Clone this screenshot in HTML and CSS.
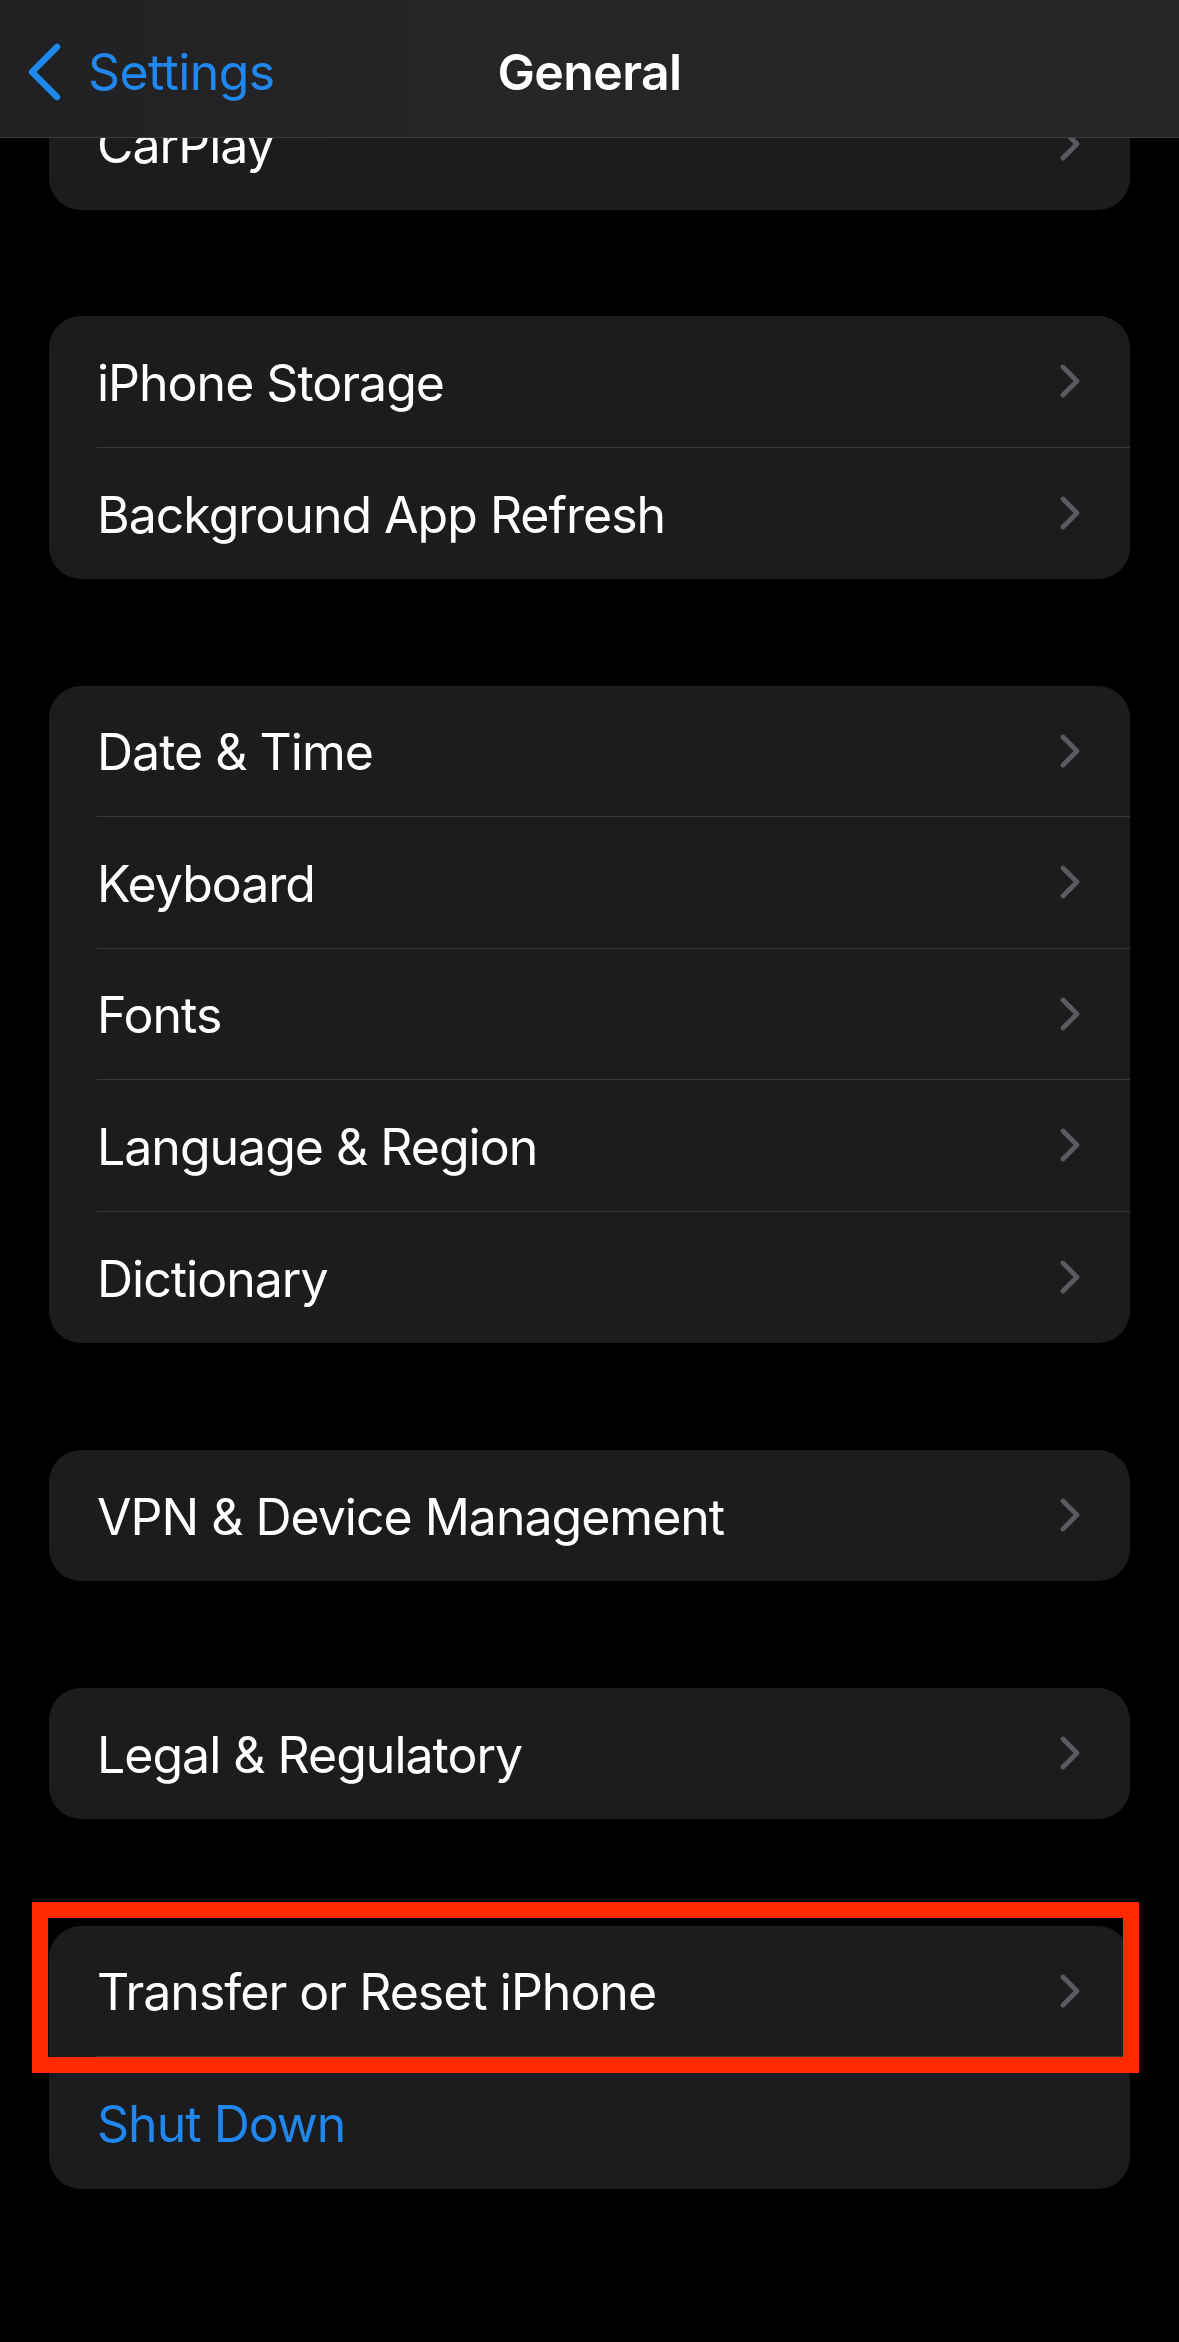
FILE: index.html
```html
<!DOCTYPE html>
<html>
<head>
<meta charset="utf-8">
<link rel="stylesheet" href="styles.css">
</head>
<body>
<header class="nav">
  <div class="nav-back">
    <svg class="back-chev" width="36" height="58" viewBox="0 0 36 58"><path d="M31 4 L6 29 L31 54" fill="none" stroke="#1f87ee" stroke-width="6.5" stroke-linecap="round" stroke-linejoin="round"/></svg>
    <span class="back-label">Settings</span>
  </div>
  <div class="nav-title">General</div>
</header>

<main class="content">
  <section class="group group-first">
    <div class="row last"><div class="row-body"><span class="label">CarPlay</span><svg class="chev" width="20" height="34" viewBox="0 0 20 34"><path d="M3 3 L17 17 L3 31" fill="none" stroke="#5b5b5f" stroke-width="4.8" stroke-linecap="round" stroke-linejoin="round"/></svg></div></div>
  </section>

  <section class="group">
    <div class="row"><div class="row-body"><span class="label">iPhone Storage</span><svg class="chev" width="20" height="34" viewBox="0 0 20 34"><path d="M3 3 L17 17 L3 31" fill="none" stroke="#5b5b5f" stroke-width="4.8" stroke-linecap="round" stroke-linejoin="round"/></svg></div></div>
    <div class="row last"><div class="row-body"><span class="label">Background App Refresh</span><svg class="chev" width="20" height="34" viewBox="0 0 20 34"><path d="M3 3 L17 17 L3 31" fill="none" stroke="#5b5b5f" stroke-width="4.8" stroke-linecap="round" stroke-linejoin="round"/></svg></div></div>
  </section>

  <section class="group">
    <div class="row"><div class="row-body"><span class="label">Date &amp; Time</span><svg class="chev" width="20" height="34" viewBox="0 0 20 34"><path d="M3 3 L17 17 L3 31" fill="none" stroke="#5b5b5f" stroke-width="4.8" stroke-linecap="round" stroke-linejoin="round"/></svg></div></div>
    <div class="row"><div class="row-body"><span class="label">Keyboard</span><svg class="chev" width="20" height="34" viewBox="0 0 20 34"><path d="M3 3 L17 17 L3 31" fill="none" stroke="#5b5b5f" stroke-width="4.8" stroke-linecap="round" stroke-linejoin="round"/></svg></div></div>
    <div class="row"><div class="row-body"><span class="label">Fonts</span><svg class="chev" width="20" height="34" viewBox="0 0 20 34"><path d="M3 3 L17 17 L3 31" fill="none" stroke="#5b5b5f" stroke-width="4.8" stroke-linecap="round" stroke-linejoin="round"/></svg></div></div>
    <div class="row"><div class="row-body"><span class="label">Language &amp; Region</span><svg class="chev" width="20" height="34" viewBox="0 0 20 34"><path d="M3 3 L17 17 L3 31" fill="none" stroke="#5b5b5f" stroke-width="4.8" stroke-linecap="round" stroke-linejoin="round"/></svg></div></div>
    <div class="row last"><div class="row-body"><span class="label">Dictionary</span><svg class="chev" width="20" height="34" viewBox="0 0 20 34"><path d="M3 3 L17 17 L3 31" fill="none" stroke="#5b5b5f" stroke-width="4.8" stroke-linecap="round" stroke-linejoin="round"/></svg></div></div>
  </section>

  <section class="group">
    <div class="row last"><div class="row-body"><span class="label">VPN &amp; Device Management</span><svg class="chev" width="20" height="34" viewBox="0 0 20 34"><path d="M3 3 L17 17 L3 31" fill="none" stroke="#5b5b5f" stroke-width="4.8" stroke-linecap="round" stroke-linejoin="round"/></svg></div></div>
  </section>

  <section class="group">
    <div class="row last"><div class="row-body"><span class="label">Legal &amp; Regulatory</span><svg class="chev" width="20" height="34" viewBox="0 0 20 34"><path d="M3 3 L17 17 L3 31" fill="none" stroke="#5b5b5f" stroke-width="4.8" stroke-linecap="round" stroke-linejoin="round"/></svg></div></div>
  </section>

  <section class="group">
    <div class="row"><div class="row-body"><span class="label">Transfer or Reset iPhone</span><svg class="chev" width="20" height="34" viewBox="0 0 20 34"><path d="M3 3 L17 17 L3 31" fill="none" stroke="#5b5b5f" stroke-width="4.8" stroke-linecap="round" stroke-linejoin="round"/></svg></div></div>
    <div class="row last"><div class="row-body"><span class="label action">Shut Down</span></div></div>
  </section>
</main>

<div class="highlight"></div>
</body>
</html>
```

FILE: styles.css
```css
html, body {
  margin: 0;
  padding: 0;
}
body {
  background: #000;
  width: 1179px;
  height: 2342px;
  overflow: hidden;
  position: relative;
  font-family: Inter, "Noto Sans", "Liberation Sans", sans-serif;
  color: #fff;
  -webkit-font-smoothing: antialiased;
}

.nav {
  position: absolute;
  top: 0;
  left: 0;
  right: 0;
  height: 138px;
  box-sizing: border-box;
  padding-top: 7px;
  background: linear-gradient(90deg, #212123 0%, #262628 45%, #252527 100%);
  border-bottom: 1px solid #3a3a3c;
  display: flex;
  align-items: center;
  z-index: 5;
}
.nav-back {
  display: flex;
  align-items: center;
  margin-left: 26px;
  gap: 26px;
}
.back-chev {
  display: block;
}
.back-label {
  font-size: 50px;
  letter-spacing: -0.6px;
  color: #1f87ee;
}
.nav-title {
  position: absolute;
  left: 0;
  right: 0;
  top: 7px;
  bottom: 0;
  display: flex;
  align-items: center;
  justify-content: center;
  font-size: 50px;
  font-weight: 600;
  letter-spacing: -0.6px;
  pointer-events: none;
}

.content {
  padding: 78px 49px 0;
  display: flex;
  flex-direction: column;
  gap: 106.5px;
}

.group {
  background: #1c1c1e;
  border-radius: 32px;
  overflow: hidden;
}

.row {
  height: 131.5px;
  padding-left: 48px;
  box-sizing: border-box;
}
.row-body {
  height: 100%;
  box-sizing: border-box;
  display: flex;
  align-items: center;
  justify-content: space-between;
  padding-right: 50px;
  border-bottom: 1.5px solid #38383a;
}
.row.last .row-body {
  border-bottom: none;
}
.label {
  font-size: 50px;
  letter-spacing: -1px;
  color: #fff;
  white-space: nowrap;
  position: relative;
  top: 1.5px;
}
.label.action {
  color: #1f87ee;
}
.chev {
  display: block;
  flex-shrink: 0;
}

.highlight {
  position: absolute;
  left: 32px;
  top: 1902px;
  width: 1107px;
  height: 171px;
  box-sizing: border-box;
  border: 16.5px solid #ff2a00;
  z-index: 4;
}
```
